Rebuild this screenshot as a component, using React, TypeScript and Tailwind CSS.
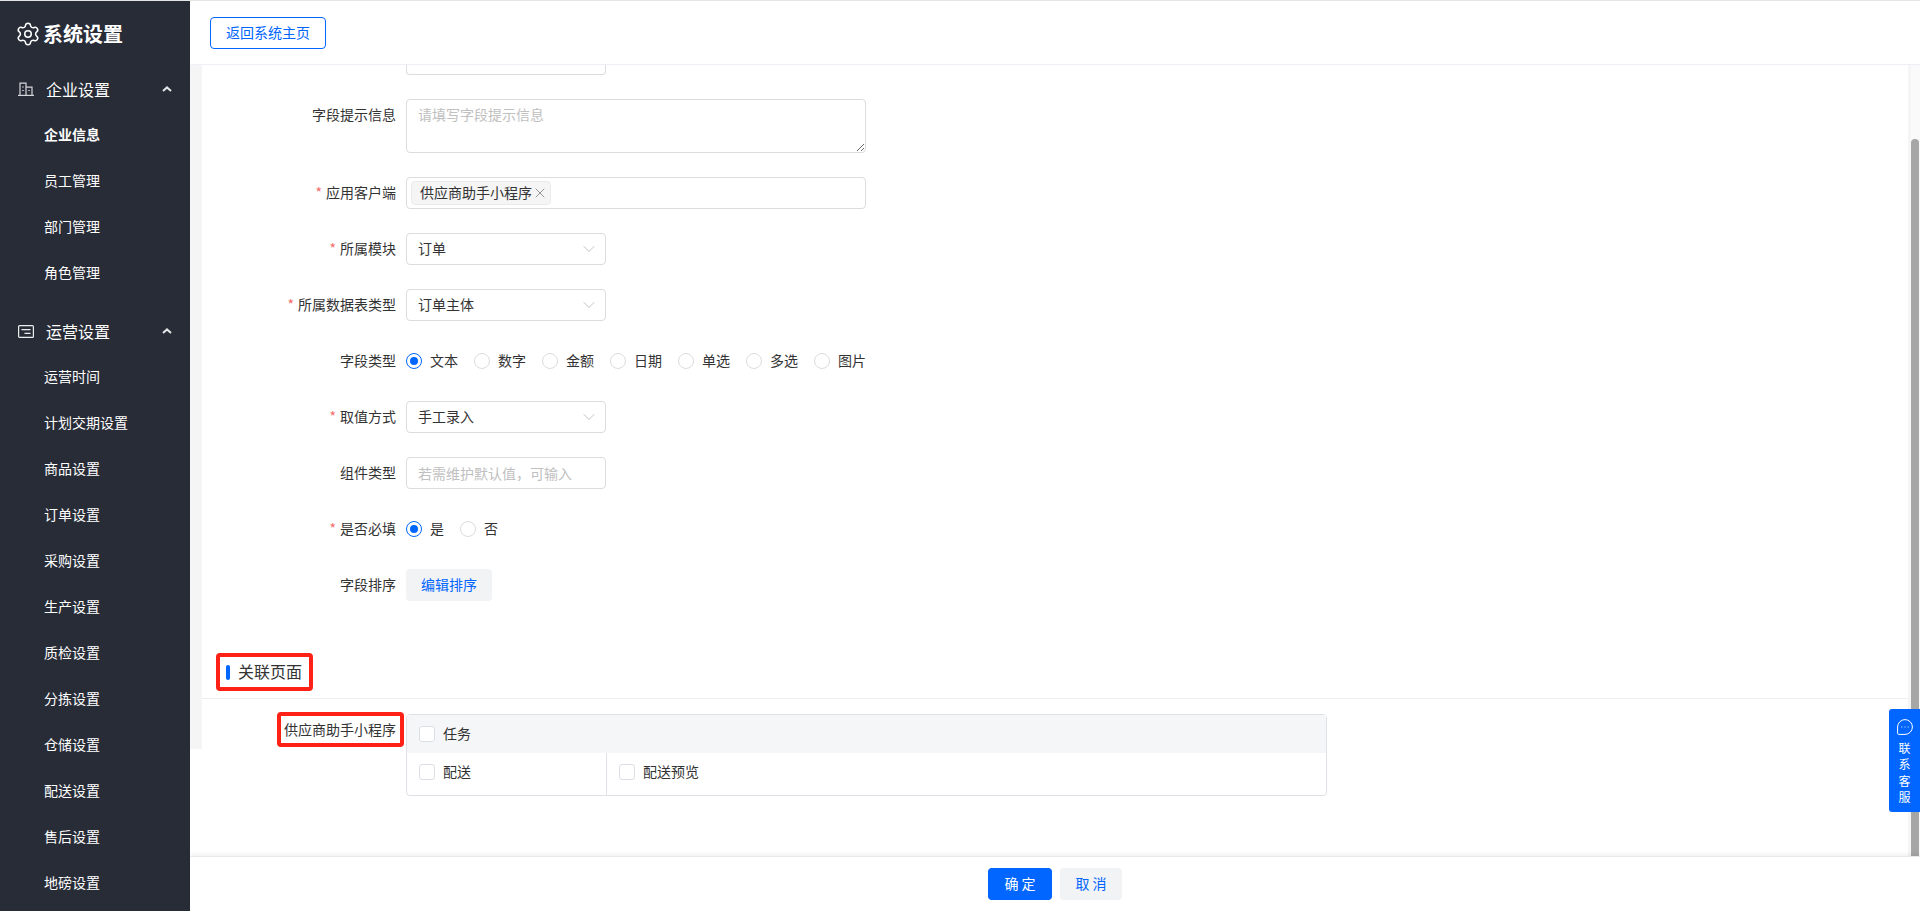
import { Settings, X, ChevronDown } from 'lucide-react';

const groups = [
  {
    title: '企业设置',
    icon: 'building',
    items: ['企业信息', '员工管理', '部门管理', '角色管理'],
  },
  {
    title: '运营设置',
    icon: 'doc',
    items: [
      '运营时间',
      '计划交期设置',
      '商品设置',
      '订单设置',
      '采购设置',
      '生产设置',
      '质检设置',
      '分拣设置',
      '仓储设置',
      '配送设置',
      '售后设置',
      '地磅设置',
    ],
  },
];

const BuildingIcon = () => (
  <svg width="16" height="14" viewBox="0 0 16 14" fill="none" stroke="#d5d6da" strokeWidth="1.2">
    <path d="M0 13.4h16" />
    <path d="M2 13V1.2h6V13" />
    <path d="M8 5.2h6V13" />
    <path d="M4.2 5h1.6M4.2 8.5h1.6M10.3 8.5h1.5" />
  </svg>
);

const DocIcon = () => (
  <svg width="16" height="13" viewBox="0 0 16 13" fill="none" stroke="#eceded" strokeWidth="1.2">
    <rect x="0.6" y="0.6" width="14.8" height="11.8" rx="1" />
    <path d="M3.5 4.6h9M6.5 8.4h6" />
  </svg>
);

const ChevronUp = () => (
  <svg width="10" height="6" viewBox="0 0 10 6" fill="none" stroke="#e4e5e7" strokeWidth="2">
    <path d="M1 5l4-3.6L9 5" />
  </svg>
);

const Label = ({ text, required }: { text?: string; required?: boolean }) => (
  <div className="w-[204px] shrink-0 pr-[10px] text-right leading-[30px] text-[#333]">
    {required && <span className="mr-1 text-[#f56c6c]">*</span>}
    {text}
  </div>
);

const Select = ({ value }: { value: string }) => (
  <div className="flex h-8 w-[200px] items-center justify-between rounded border border-[#dcdcdc] pl-[11px] pr-[6px] text-[#333]">
    <span className="pb-[2px]">{value}</span>
    <ChevronDown size={20} strokeWidth={1} color="#b8b8b8" />
  </div>
);

const Radio = ({ text, checked }: { text: string; checked?: boolean }) => (
  <div className="flex items-center gap-2 text-[#333]">
    {checked ? (
      <span className="flex size-4 items-center justify-center rounded-full border border-[#0066ff]">
        <span className="size-2 rounded-full bg-[#0066ff]" />
      </span>
    ) : (
      <span className="size-4 rounded-full border border-[#dcdcdc]" />
    )}
    <span className="pb-[2px]">{text}</span>
  </div>
);

const Check = ({ text }: { text: string }) => (
  <div className="flex items-center gap-2 text-[#333]">
    <span className="size-4 rounded-[3px] border border-[#dcdfe6] bg-white" />
    <span className="pb-[2px]">{text}</span>
  </div>
);

export default function App() {
  return (
    <div className="flex h-screen w-full overflow-hidden border-t border-[#e5e5e5] bg-white text-sm [font-family:'Noto_Sans_CJK_SC',sans-serif]">
      <aside className="w-[190px] shrink-0 bg-[#282c37] text-white">
        <div className="mb-px flex h-[65px] items-center pl-[15px]">
          <Settings size={26} strokeWidth={1.4} />
          <span className="ml-[2px] text-xl font-bold">系统设置</span>
        </div>
        {groups.map((group) => (
          <div key={group.title} className="mb-[14px]">
            <div className="flex h-11 items-center pl-[18px] pr-[18px]">
              <span className="flex w-4 justify-center">
                {group.icon === 'building' ? <BuildingIcon /> : <DocIcon />}
              </span>
              <span className="ml-3 flex-1 text-base">{group.title}</span>
              <ChevronUp />
            </div>
            {group.items.map((item) => (
              <div
                key={item}
                className={`flex h-[46px] items-center pl-11 ${item === '企业信息' ? 'font-bold' : ''}`}
              >
                {item}
              </div>
            ))}
          </div>
        ))}
      </aside>

      <main className="flex min-w-0 flex-1 flex-col">
        <header className="flex h-16 shrink-0 items-center border-b border-[#eef0f5] pl-5">
          <button className="h-8 w-[116px] rounded border border-[#0066ff] pb-[2px] text-[#0066ff]">
            返回系统主页
          </button>
        </header>

        <div className="relative flex min-h-0 flex-1">
          <div className="h-[684px] w-3 shrink-0 bg-[#f5f5f5]" />

          <div className="min-w-0 flex-1 overflow-hidden">
            <div className="mb-6 ml-[204px] h-[10px] w-[200px]">
              <div className="h-full rounded-b border border-t-0 border-[#dcdcdc]" />
            </div>

            <div className="mb-6 flex">
              <Label text="字段提示信息" />
              <textarea
                readOnly
                placeholder="请填写字段提示信息"
                className="h-[54px] w-[460px] rounded border border-[#dcdcdc] px-[11px] py-[3px] leading-[22px] outline-none placeholder:text-[#c0c0c0]"
              />
            </div>

            <div className="mb-6 flex">
              <Label text="应用客户端" required />
              <div className="flex h-8 w-[460px] items-center rounded border border-[#dcdcdc] pl-1">
                <div className="flex h-6 w-[140px] items-center gap-0 rounded border border-[#ebebeb] bg-[#f5f5f5] pl-2 text-[#333]">
                  <span className="pb-[2px]">供应商助手小程序</span>
                  <X size={16} strokeWidth={1.3} color="#888" />
                </div>
              </div>
            </div>

            <div className="mb-6 flex">
              <Label text="所属模块" required />
              <Select value="订单" />
            </div>

            <div className="mb-6 flex">
              <Label text="所属数据表类型" required />
              <Select value="订单主体" />
            </div>

            <div className="mb-6 flex h-8">
              <Label text="字段类型" />
              <div className="flex gap-4">
                <Radio text="文本" checked />
                {['数字', '金额', '日期', '单选', '多选', '图片'].map((t) => (
                  <Radio key={t} text={t} />
                ))}
              </div>
            </div>

            <div className="mb-6 flex">
              <Label text="取值方式" required />
              <Select value="手工录入" />
            </div>

            <div className="mb-6 flex">
              <Label text="组件类型" />
              <input
                readOnly
                placeholder="若需维护默认值，可输入"
                className="h-8 w-[200px] rounded border border-[#dcdcdc] px-[11px] outline-none placeholder:text-[#c0c0c0]"
              />
            </div>

            <div className="mb-6 flex h-8">
              <Label text="是否必填" required />
              <div className="flex gap-4">
                <Radio text="是" checked />
                <Radio text="否" />
              </div>
            </div>

            <div className="flex">
              <Label text="字段排序" />
              <button className="h-8 w-[86px] rounded bg-[#f2f3f5] pb-[2px] text-[#0066ff]">编辑排序</button>
            </div>

            <div className="mt-[52px] mb-[7px] ml-[14px] flex h-[38px] w-[97px] items-center rounded-[4px] border-4 border-[#ff2116] pl-[6px]">
              <span className="h-[15px] w-1 rounded-sm bg-[#0066ff]" />
              <span className="ml-2 pb-[3px] text-base text-[#333]">关联页面</span>
            </div>
            <div className="h-px bg-[#eeeeee]" />

            <div className="mt-[15px] flex">
              <div className="w-[204px] shrink-0 pr-[10px] text-right">
                <span className="relative inline-block leading-[30px] text-[#333]">
                  供应商助手小程序
                  <span className="absolute -top-[2px] -right-2 -bottom-[3px] -left-[7px] rounded-[4px] border-4 border-[#ff2116]" />
                </span>
              </div>
              <div className="w-[921px] rounded border border-[#dfe1e6]">
                <div className="flex h-[38px] items-center bg-[#f5f6f8] pl-3">
                  <Check text="任务" />
                </div>
                <div className="flex h-[42px]">
                  <div className="flex w-[200px] items-center border-r border-[#dfe1e6] pb-1 pl-3">
                    <Check text="配送" />
                  </div>
                  <div className="flex items-center pb-1 pl-3">
                    <Check text="配送预览" />
                  </div>
                </div>
              </div>
            </div>
          </div>

          <div className="flex w-3 shrink-0 border-l-[3px] border-[#f5f5f5] bg-[#fafafa] pt-[74px]">
            <div className="h-full w-2 rounded-t-full bg-[#a6a6a6]" />
          </div>

          <div className="absolute right-0 top-[644px] flex h-[103px] w-[31px] flex-col items-center rounded-l-[3px] bg-[#0066ff] pt-[10px] text-xs leading-[16.3px] text-white">
            <svg width="16" height="16" viewBox="0 0 16 16" fill="none" stroke="white" strokeWidth="1" className="mb-[5px]">
              <path d="M8 .6a7.4 7.4 0 1 1 0 14.8H1.6a1 1 0 0 1-1-1V8A7.4 7.4 0 0 1 8 .6z" />
              <path d="M4.6 8h.6M7.7 8h.6M10.8 8h.6" strokeWidth="1.4" />
            </svg>
            <span>联</span>
            <span>系</span>
            <span>客</span>
            <span>服</span>
          </div>
        </div>

        <footer className="relative flex h-[55px] shrink-0 items-center justify-center gap-2 border-t border-[#e8e9ec] bg-white shadow-[0_-2px_4px_rgba(0,0,0,0.06)]">
          <button className="h-8 w-16 rounded bg-[#0066ff] pb-[2px] text-white">确 定</button>
          <button className="h-8 w-[62px] rounded bg-[#f2f3f5] pb-[2px] text-[#0066ff]">取 消</button>
        </footer>
      </main>
    </div>
  );
}
